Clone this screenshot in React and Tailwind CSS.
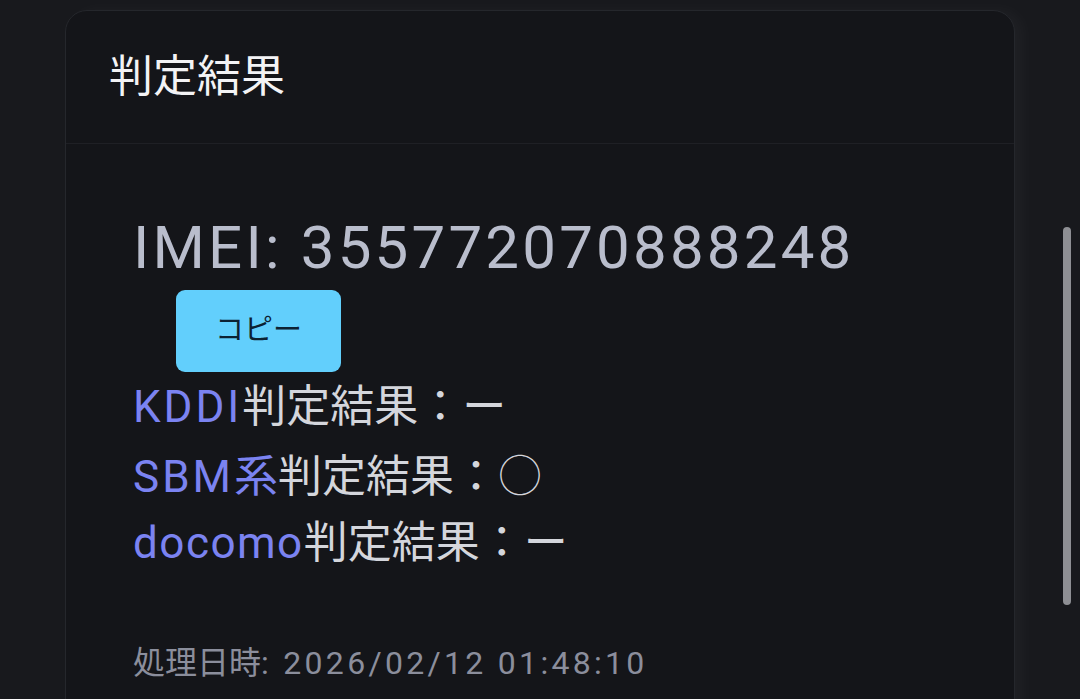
export default function App() {
  const latin = { fontFamily: "Roboto, 'Noto Sans CJK JP', sans-serif" };
  return (
    <div className="relative h-[699px] w-[1080px] overflow-hidden bg-[#18191d]" style={latin}>
      <div className="ml-[65px] mt-[10px] w-[950px] h-[900px] rounded-[22px] border border-[#25272c] bg-[#141519] shadow-[8px_0_16px_rgba(255,255,255,0.035)]">
        <div className="h-[133px] border-b border-[#1f2025] pl-[43px] pt-[44px]">
          <h2 className="text-[44px] leading-[44px] text-[#f3f3f5] font-normal">判定結果</h2>
        </div>
        <div className="pl-[67px] pt-[64px]">
          <div className="text-[60px] leading-[80px] tracking-[3.2px] text-[#b9bdcc]">IMEI: 355772070888248</div>
          <button className="mt-[2px] ml-[43px] flex h-[82px] w-[165px] items-center justify-center rounded-[9px] bg-[#62cffc] text-[29px] text-[#0c2233]">
            コピー
          </button>
          <div className="mt-[2px] text-[44px] leading-[66px] text-[#d4d6dc]">
            <div><span className="tracking-[3px] text-[#7b83f1]">KDDI</span>判定結果：ー</div>
            <div><span className="text-[#7b83f1]"><span className="tracking-[3px]">SBM</span>系</span>判定結果：<span className="font-thin" style={{ fontFamily: "'Noto Sans CJK JP', sans-serif" }}>○</span></div>
            <div><span className="tracking-[1.5px] text-[#7b83f1]">docomo</span>判定結果：ー</div>
          </div>
          <div className="mt-[65px] text-[32px] leading-[44px] text-[#8b8e9c]">
            処理日時<span className="tracking-[3.3px]">: 2026/02/12 01:48:10</span>
          </div>
          <div className="mt-[12px] text-[32px] leading-[44px] text-[#8b8e9c]">
            本結果は参考情報としてご利用ください
          </div>
        </div>
      </div>
      <div className="absolute left-[1063px] top-[227px] h-[378px] w-[8px] rounded-full bg-[#8e8f94]" />
    </div>
  );
}
